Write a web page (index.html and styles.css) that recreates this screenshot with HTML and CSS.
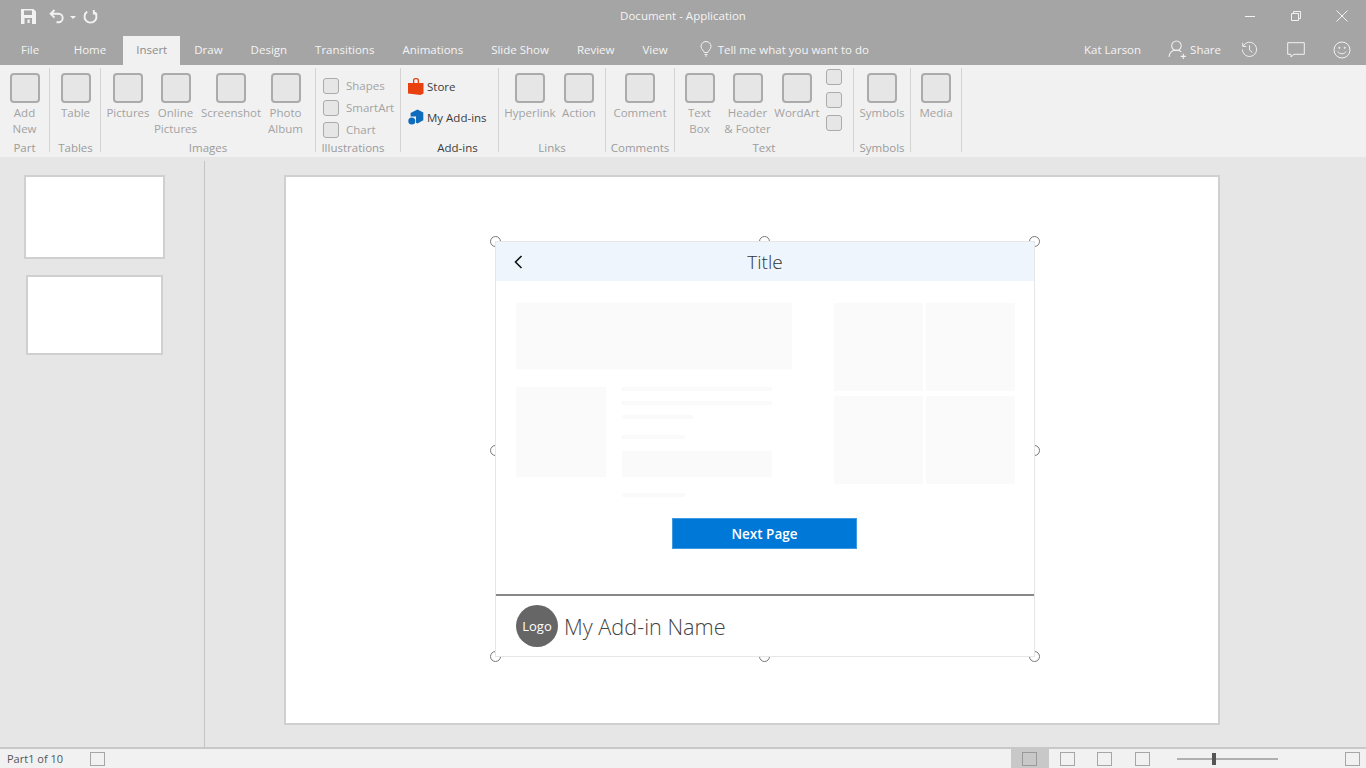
FILE: index.html
```html
<!DOCTYPE html>
<html lang="en">
<head>
    <meta charset="UTF-8">
    <title>Document - Application</title>
    <link rel="stylesheet" href="styles.css">
</head>
<body>

<header class="chrome">
    <div class="titlebar">
        <div class="quick">
            <svg class="ico-save" viewBox="0 0 15 15"><path fill-rule="evenodd" d="M0 0h12.500L15 2.500V15H0zM3 1.500V6h8V1.500zM3.500 9v6H11V9zM6.500 10.500h2.200V14H6.500z"/></svg>
            <svg class="ico-undo" viewBox="0 0 15 15"><path d="M5.500 1 1.700 4.800l3.800 3.800M2 4.800h7.500a4.200 4.200 0 0 1 0 8.400H7.500"/></svg>
            <span class="caret"></span>
            <svg class="ico-redo" viewBox="0 0 15 15"><path d="M4.200 2.600a6 6 0 1 0 6.600 0M10.800 1v3.600h3.400"/></svg>
        </div>
        <div class="doc-title">Document - Application</div>
        <div class="winctl">
            <svg viewBox="0 0 12 12"><path d="M1 6.500h10"/></svg>
            <svg viewBox="0 0 12 12"><path d="M1.500 3.500h7v7h-7zM3.500 3.500v-2h7v7h-2"/></svg>
            <svg viewBox="0 0 12 12"><path d="M.5.500l11 11M11.500.500l-11 11"/></svg>
        </div>
    </div>
    <nav class="tabs">
        <a class="tab tab-file">File</a>
        <a class="tab">Home</a>
        <a class="tab active">Insert</a>
        <a class="tab">Draw</a>
        <a class="tab">Design</a>
        <a class="tab">Transitions</a>
        <a class="tab">Animations</a>
        <a class="tab">Slide Show</a>
        <a class="tab">Review</a>
        <a class="tab">View</a>
        <div class="tell">
            <svg viewBox="0 0 12 16"><path d="M4.200 11.500C4 9.500 1 8.500 1 5.500a5 5 0 0 1 10 0c0 3-3 4-3.200 6zM4.500 13.500h3M5.200 15h1.600"/></svg>
            <span>Tell me what you want to do</span>
        </div>
        <div class="account">
            <span class="user">Kat Larson</span>
            <span class="share">
                <svg viewBox="0 0 18 18"><circle cx="8" cy="5.500" r="4.500"/><path d="M1 16c.5-4 3-6.500 7-6.500 2 0 3.500.7 4.600 1.800M14.500 13v5M12 15.500h5"/></svg>
                Share
            </span>
            <svg class="ico-hist" viewBox="0 0 18 18"><path d="M2.300 5.500A7.500 7.500 0 1 1 1.500 9M1.800 1.800v3.900h3.900M9 4.500V9.500l3 2.500"/></svg>
            <svg class="ico-comment" viewBox="0 0 18 16"><path d="M.7.700h16.600v11.600H7L4 15v-2.700H.7z"/></svg>
            <svg class="ico-smile" viewBox="0 0 18 18"><circle cx="9" cy="9" r="8"/><path d="M5 10.500c1 3 7 3 8 0"/><circle class="eye" cx="6.300" cy="6.800" r=".6"/><circle class="eye" cx="11.700" cy="6.800" r=".6"/></svg>
        </div>
    </nav>
</header>

<section class="ribbon">
    <div class="group g-part">
        <div class="tools">
            <div class="tool"><span class="box"></span>Add<br>New</div>
        </div>
        <div class="group-label">Part</div>
    </div>
    <div class="group g-tables">
        <div class="tools">
            <div class="tool"><span class="box"></span>Table</div>
        </div>
        <div class="group-label">Tables</div>
    </div>
    <div class="group g-images">
        <div class="tools">
            <div class="tool"><span class="box"></span>Pictures</div>
            <div class="tool"><span class="box"></span>Online<br>Pictures</div>
            <div class="tool"><span class="box"></span>Screenshot</div>
            <div class="tool"><span class="box"></span>Photo<br>Album</div>
        </div>
        <div class="group-label">Images</div>
    </div>
    <div class="group g-illus">
        <div class="rows">
            <div class="row"><span class="box-sm"></span>Shapes</div>
            <div class="row"><span class="box-sm"></span>SmartArt</div>
            <div class="row"><span class="box-sm"></span>Chart</div>
        </div>
        <div class="group-label">Illustrations</div>
    </div>
    <div class="group g-addins">
        <div class="addin-links">
            <div class="addin-link">
                <svg viewBox="0 0 16 17"><path class="bag" d="M0 5h5V2.200C5 .8 6 0 7.600 0h.8C10 0 11 .8 11 2.200V5h4.500v10.500L12.500 17 0 15.500zM6.300 5h3.400V2.500c0-.8-.5-1.200-1.300-1.200h-.8c-.8 0-1.300.4-1.300 1.200z"/></svg>
                Store
            </div>
            <div class="addin-link">
                <svg viewBox="0 0 16 16"><path class="hex" d="M9.500 0l5.800 3v7.800L9.500 14 8 13.200V7H2.600V3.500z"/><circle class="hex" cx="3.800" cy="11.500" r="3.500"/></svg>
                My Add-ins
            </div>
        </div>
        <div class="group-label dark">Add-ins</div>
    </div>
    <div class="group g-links">
        <div class="tools">
            <div class="tool"><span class="box"></span>Hyperlink</div>
            <div class="tool"><span class="box"></span>Action</div>
        </div>
        <div class="group-label">Links</div>
    </div>
    <div class="group g-comments">
        <div class="tools">
            <div class="tool"><span class="box"></span>Comment</div>
        </div>
        <div class="group-label">Comments</div>
    </div>
    <div class="group g-text">
        <div class="tools">
            <div class="tool"><span class="box"></span>Text<br>Box</div>
            <div class="tool"><span class="box"></span>Header<br>&amp; Footer</div>
            <div class="tool"><span class="box"></span>WordArt</div>
            <div class="stack">
                <span class="box-sm"></span>
                <span class="box-sm"></span>
                <span class="box-sm"></span>
            </div>
        </div>
        <div class="group-label">Text</div>
    </div>
    <div class="group g-symbols">
        <div class="tools">
            <div class="tool"><span class="box"></span>Symbols</div>
        </div>
        <div class="group-label">Symbols</div>
    </div>
    <div class="group g-media">
        <div class="tools">
            <div class="tool"><span class="box"></span>Media</div>
        </div>
    </div>
</section>

<main class="workspace">
    <aside class="thumbs">
        <div class="thumb thumb-first"></div>
        <div class="thumb thumb-second"></div>
    </aside>
    <div class="stage">
        <div class="slide">
            <div class="selection">
                <span class="handle h-tl"></span>
                <span class="handle h-tc"></span>
                <span class="handle h-tr"></span>
                <span class="handle h-ml"></span>
                <span class="handle h-mr"></span>
                <span class="handle h-bl"></span>
                <span class="handle h-bc"></span>
                <span class="handle h-br"></span>
                <div class="addin">
                    <div class="addin-head">
                        <svg class="back" viewBox="0 0 9 14"><path d="M7.500 1 1.500 7l6 6"/></svg>
                        <span class="addin-title">Title</span>
                    </div>
                    <div class="addin-body">
                        <div class="columns">
                            <div class="col-left">
                                <div class="ph hero"></div>
                                <div class="media-row">
                                    <div class="ph pic"></div>
                                    <div class="lines">
                                        <div class="ph line"></div>
                                        <div class="ph line"></div>
                                        <div class="ph line short"></div>
                                        <div class="ph line shorter mt"></div>
                                        <div class="ph field"></div>
                                        <div class="ph line shorter mt"></div>
                                    </div>
                                </div>
                            </div>
                            <div class="tiles">
                                <div class="ph"></div>
                                <div class="ph"></div>
                                <div class="ph"></div>
                                <div class="ph"></div>
                            </div>
                        </div>
                        <button class="next-btn">Next Page</button>
                    </div>
                    <div class="addin-foot">
                        <span class="logo">Logo</span>
                        <span class="addin-name">My Add-in Name</span>
                    </div>
                </div>
            </div>
        </div>
    </div>
</main>

<footer class="statusbar">
    <span class="status-text">Part1 of 10</span>
    <span class="box-st"></span>
    <div class="status-right">
        <div class="view-btn on"><span class="box-st"></span></div>
        <div class="view-btn"><span class="box-st"></span></div>
        <div class="view-btn"><span class="box-st"></span></div>
        <div class="view-btn"><span class="box-st"></span></div>
        <div class="zoom-slider"><span class="zoom-thumb"></span></div>
        <span class="box-st fit"></span>
    </div>
</footer>

</body>
</html>
```

FILE: styles.css
```css
* {
    box-sizing: border-box;
}

html, body {
    height: 768px;
    margin: 0;
    overflow: hidden;
}

body {
    display: flex;
    flex-direction: column;
    background-color: #e6e6e6;
    font-family: "Open Sans", "Noto Sans", sans-serif;
    font-size: 11.5px;
    color: #444;
}

svg {
    display: block;
    fill: none;
    stroke: #f2f2f2;
}

/* title bar and tabs */
.chrome {
    height: 65px;
    flex: none;
    background-color: #a5a5a5;
    color: #f4f4f4;
}

.titlebar {
    position: relative;
    display: flex;
    justify-content: space-between;
    height: 36px;
    padding: 9px 18px 0 21px;
}

.quick {
    display: flex;
    align-items: flex-start;
}

.ico-save {
    width: 15px;
    height: 15px;
    fill: #f2f2f2;
    stroke: none;
}

.ico-undo {
    width: 15px;
    height: 15px;
    margin-left: 13px;
    stroke-width: 1.9;
}

.caret {
    width: 0;
    height: 0;
    margin: 7px 0 0 6px;
    border-left: 3px solid transparent;
    border-right: 3px solid transparent;
    border-top: 3px solid #f2f2f2;
}

.ico-redo {
    width: 15px;
    height: 15px;
    margin-left: 7px;
    stroke-width: 1.9;
}

.doc-title {
    position: absolute;
    left: 0;
    right: 0;
    top: 8px;
    text-align: center;
    font-size: 11.5px;
    line-height: 16px;
}

.winctl {
    display: flex;
    gap: 34px;
    padding-top: 1px;
}

.winctl svg {
    width: 12px;
    height: 12px;
}

.tabs {
    display: flex;
    align-items: stretch;
    height: 29px;
    padding-left: 7px;
}

.tab {
    display: flex;
    align-items: center;
    padding: 0 14px 3px;
    font-size: 11.5px;
}

.tab-file {
    padding-right: 20.5px;
}

.tab.active {
    margin-left: 3px;
    padding: 0 13px 3px;
    background-color: #f1f1f1;
    color: #8c8c8c;
}

.tell {
    display: flex;
    align-items: center;
    gap: 6px;
    margin-left: 18px;
    padding-bottom: 3px;
}

.tell svg {
    width: 12px;
    height: 16px;
}

.account {
    display: flex;
    align-items: center;
    margin-left: auto;
    padding: 0 15px 2px 0;
}

.user {
    margin-right: 27px;
}

.share {
    display: flex;
    align-items: center;
    gap: 3px;
    margin-right: 20px;
}

.share svg {
    width: 19px;
    height: 19px;
}

.ico-hist {
    width: 17px;
    height: 17px;
    margin-right: 29px;
}

.ico-comment {
    width: 18px;
    height: 16px;
    margin-right: 28px;
}

.ico-smile {
    width: 18px;
    height: 18px;
}

.eye {
    fill: #f2f2f2;
}

/* ribbon */
.ribbon {
    display: flex;
    height: 92px;
    flex: none;
    padding-top: 3px;
    background-color: #f1f1f1;
    color: #a3a3a3;
}

.group {
    display: flex;
    flex-direction: column;
    height: 84px;
    flex: none;
    border-right: 1px solid #d4d4d4;
}

.g-part { width: 50px; }
.g-tables { width: 51px; padding-left: 1px; }
.g-images { width: 215px; }
.g-illus { width: 85px; }
.g-addins { width: 98px; }
.g-links { width: 107px; }
.g-comments { width: 69px; }
.g-text { width: 179px; }
.g-symbols { width: 57px; }
.g-media { width: 51px; }

.tools {
    display: grid;
    grid-auto-flow: column;
    grid-auto-columns: 1fr;
    padding-top: 5px;
}

.g-images .tools {
    grid-template-columns: 48px 47px 64px 45px;
    grid-auto-columns: auto;
    padding-left: 3px;
}

.g-links .tools {
    grid-template-columns: 50px 48px;
    grid-auto-columns: auto;
    padding-left: 6px;
}

.g-text .tools {
    grid-template-columns: 49px 47px 52px 21px;
    grid-auto-columns: auto;
}

.tool {
    display: flex;
    flex-direction: column;
    align-items: center;
    text-align: center;
    white-space: nowrap;
    line-height: 16px;
}

.box {
    display: block;
    width: 30px;
    height: 30px;
    margin-bottom: 2px;
    background-color: #e6e6e6;
    border: 2px solid #ababab;
    border-radius: 4px;
}

.box-sm {
    display: block;
    width: 16px;
    height: 16px;
    flex: none;
    background-color: #e6e6e6;
    border: 1.5px solid #ababab;
    border-radius: 3px;
}

.stack {
    display: flex;
    flex-direction: column;
    align-items: center;
    gap: 7px;
    margin-top: -4px;
}

.group-label {
    height: 12px;
    margin-top: auto;
    margin-bottom: -2px;
    text-align: center;
    line-height: 12px;
    color: #9b9b9b;
}

.g-illus .group-label {
    padding-right: 10px;
}

.g-addins .group-label {
    padding-left: 16px;
}

.group-label.dark {
    color: #3c3c3c;
}

.rows {
    display: flex;
    flex-direction: column;
    gap: 6px;
    padding: 10px 0 0 7px;
}

.row {
    display: flex;
    align-items: center;
    gap: 7px;
    line-height: 16px;
}

.addin-links {
    display: flex;
    flex-direction: column;
    gap: 14px;
    padding: 10px 0 0 7px;
    color: #3c3c3c;
}

.addin-link {
    display: flex;
    align-items: center;
    gap: 3px;
    line-height: 17px;
}

.addin-link svg {
    width: 16px;
    height: 17px;
    stroke: none;
}

.bag {
    fill: #e8410f;
    fill-rule: evenodd;
    stroke: none;
}

.hex {
    fill: #0f6cbd;
    stroke: none;
}

/* slide area */
.workspace {
    display: flex;
    flex: 1;
    min-height: 0;
}

.thumbs {
    display: flex;
    flex-direction: column;
    align-items: center;
    gap: 16px;
    width: 205px;
    flex: none;
    margin-top: 4px;
    padding: 14px 15px 0 0;
    border-right: 1px solid #c4c4c4;
}

.thumb {
    background-color: #fff;
    border: 2px solid #d0d0d0;
}

.thumb-first {
    width: 141px;
    height: 84px;
}

.thumb-second {
    width: 137px;
    height: 80px;
}

.stage {
    flex: 1;
    padding: 18px 0 0 79px;
}

.slide {
    width: 936px;
    height: 550px;
    padding: 64px 0 0 209px;
    background-color: #fff;
    border: 2px solid #d0d0d0;
}

.selection {
    position: relative;
    width: 540px;
    height: 416px;
}

.handle {
    position: absolute;
    width: 11px;
    height: 11px;
    margin: -5.5px 0 0 -5.5px;
    background-color: #fff;
    border: 1.5px solid #777;
    border-radius: 50%;
}

.h-tl { left: 0; top: 0; }
.h-tc { left: 269.5px; top: 0; }
.h-tr { left: 539.5px; top: 0; }
.h-ml { left: 0; top: 209px; }
.h-mr { left: 539.5px; top: 209px; }
.h-bl { left: 0; top: 415px; }
.h-bc { left: 269.5px; top: 415px; }
.h-br { left: 539.5px; top: 415px; }

.addin {
    position: relative;
    display: flex;
    flex-direction: column;
    width: 540px;
    height: 416px;
    background-color: #fff;
    border: 1px solid #e6e6e6;
}

.addin-head {
    position: relative;
    height: 39px;
    flex: none;
    background-color: #eef5fc;
    text-align: center;
}

.back {
    position: absolute;
    left: 18px;
    top: 13px;
    width: 9px;
    height: 14px;
    stroke: #111;
    stroke-width: 1.6;
}

.addin-title {
    font-size: 19px;
    font-weight: 300;
    line-height: 40px;
    color: #333;
}

.addin-body {
    display: flex;
    flex: 1;
    flex-direction: column;
    align-items: center;
    padding-top: 22px;
}

.columns {
    display: flex;
    justify-content: space-between;
    width: 499px;
    height: 194px;
}

.col-left {
    width: 276.5px;
}

.ph {
    background-color: #fafafa;
}

.hero {
    height: 66px;
    margin-bottom: 18px;
}

.media-row {
    display: flex;
    gap: 16.5px;
}

.pic {
    width: 90px;
    height: 90px;
}

.lines {
    width: 149.5px;
}

.line {
    height: 4px;
    margin-bottom: 10px;
}

.line.short {
    width: 71px;
}

.line.shorter {
    width: 63px;
}

.line.mt {
    margin-top: 16px;
    margin-bottom: 12px;
}

.field {
    height: 26px;
}

.tiles {
    display: grid;
    grid-template-columns: 89px 89px;
    grid-template-rows: 88px 88px;
    gap: 5px 3px;
}

.next-btn {
    width: 185px;
    height: 31px;
    margin: 21px 1px 0 0;
    background-color: #0078d7;
    border: 1px solid #3f99e0;
    color: #fff;
    font-family: inherit;
    font-size: 13.5px;
    font-weight: 600;
}

.addin-foot {
    display: flex;
    align-items: center;
    gap: 6px;
    height: 62px;
    flex: none;
    padding-left: 20px;
    border-top: 2px solid #888;
}

.logo {
    display: flex;
    align-items: center;
    justify-content: center;
    width: 42px;
    height: 42px;
    background-color: #666;
    border-radius: 50%;
    color: #fff;
    font-size: 13px;
}

.addin-name {
    font-size: 21.7px;
    font-weight: 300;
    color: #444;
}

/* status bar */
.statusbar {
    display: flex;
    align-items: center;
    height: 21px;
    flex: none;
    padding-left: 7px;
    background-color: #f1f1f1;
    border-top: 2px solid #c8c8c8;
}

.status-text {
    width: 83px;
    font-size: 11px;
    color: #555;
}

.box-st {
    display: block;
    width: 15px;
    height: 14px;
    background-color: #f1f1f1;
    border: 1.5px solid #a6a6a6;
}

.status-right {
    display: flex;
    align-items: center;
    height: 100%;
    margin-left: auto;
    padding-right: 6px;
}

.view-btn {
    display: flex;
    align-items: center;
    justify-content: center;
    width: 37.5px;
    height: 100%;
}

.view-btn.on {
    background-color: #c8c8c8;
}

.view-btn.on .box-st {
    background-color: #c8c8c8;
    border-color: #9a9a9a;
}

.zoom-slider {
    position: relative;
    width: 101px;
    height: 2px;
    margin: 0 67px 0 16px;
    background-color: #b0b0b0;
}

.zoom-thumb {
    position: absolute;
    left: 35px;
    top: -5px;
    width: 4px;
    height: 12px;
    background-color: #555;
}
```
